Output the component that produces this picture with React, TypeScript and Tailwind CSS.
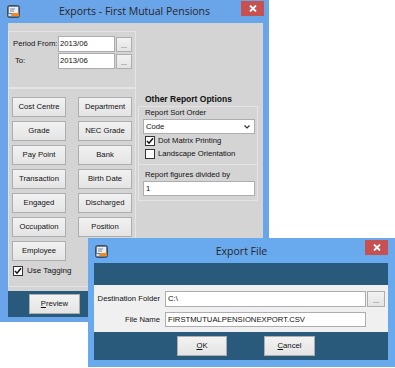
import React from "react";

function WinIcon() {
  return (
    <svg width="13" height="13" viewBox="0 0 13 13">
      <rect x="0.5" y="0.5" width="12" height="12" rx="2" fill="#6d7f95" stroke="#3f4d5e" />
      <rect x="2" y="2" width="9" height="6" fill="#e8eef5" />
      <rect x="3" y="3.5" width="5" height="1" fill="#7a8aa0" />
      <rect x="3" y="5.5" width="4" height="1" fill="#7a8aa0" />
      <rect x="5" y="8" width="7" height="3" fill="#f08a1c" />
      <rect x="1.5" y="9" width="3" height="2" fill="#d9dde3" />
    </svg>
  );
}

function CloseBtn() {
  return (
    <div className="flex items-center justify-center w-[23px] h-[15px] bg-[#c75050]">
      <svg width="8" height="7" viewBox="0 0 8 7">
        <path d="M1 0.5 L7 6.5 M7 0.5 L1 6.5" stroke="#fff" strokeWidth="1.8" />
      </svg>
    </div>
  );
}

function Btn({ children, w = "w-[54px]" }: { children: React.ReactNode; w?: string }) {
  return (
    <div
      className={`flex items-center justify-center h-[20px] ${w} border border-[#adadad] bg-linear-to-b from-[#f2f2f2] to-[#e4e4e4] text-[#111] text-[7.7px]`}
    >
      {children}
    </div>
  );
}

function SmallBtn({ w = "w-[16px]", h = "h-[15px]" }: { w?: string; h?: string }) {
  return (
    <div
      className={`flex items-center justify-center ${w} ${h} border border-[#adadad] bg-linear-to-b from-[#f2f2f2] to-[#e4e4e4] text-[#333] text-[7px] leading-none pt-[3px]`}
    >
      ...
    </div>
  );
}

function Check({ checked }: { checked: boolean }) {
  return (
    <div className="flex items-center justify-center w-[10px] h-[10px] border border-[#333] bg-white">
      {checked && (
        <svg width="8" height="8" viewBox="0 0 8 8">
          <path d="M1 4 L3 6.2 L7 1.2" stroke="#111" strokeWidth="1.5" fill="none" />
        </svg>
      )}
    </div>
  );
}

const leftButtons: [string, string | null][] = [
  ["Cost Centre", "Department"],
  ["Grade", "NEC Grade"],
  ["Pay Point", "Bank"],
  ["Transaction", "Birth Date"],
  ["Engaged", "Discharged"],
  ["Occupation", "Position"],
  ["Employee", null],
];

export default function App() {
  return (
    <div className="relative w-[395px] h-[368px] bg-white overflow-hidden font-['Liberation_Sans',Arial,sans-serif] text-[7.7px] text-[#111]">
      {/* Main window */}
      <div className="absolute left-0 top-0 w-[269px] h-[322px] bg-[#6ba5e9] flex flex-col">
        <div className="relative h-[23px] flex items-center justify-center">
          <div className="absolute left-[7px] top-[5px]">
            <WinIcon />
          </div>
          <span className="font-['Open_Sans',sans-serif] text-[10.5px] text-[#262626] mt-[1px]">
            Exports - First Mutual Pensions
          </span>
          <div className="absolute right-[5px] top-[1px]">
            <CloseBtn />
          </div>
        </div>
        <div className="flex-1 ml-[8px] mr-[6px] mb-[5px] bg-[#d4d4d4] flex flex-col">
          {/* Period group */}
          <div className="mt-[8px] w-[128px] h-[57px] border border-[#e4e4e4] pl-[4px] pt-[4px] flex flex-col gap-[1px]">
            <div className="flex items-center h-[16px]">
              <span className="w-[45px]">Period From:</span>
              <div className="w-[57px] h-[16px] bg-white border border-[#abadb3] flex items-center pl-[1px]">2013/06</div>
              <div className="ml-[1px]">
                <SmallBtn />
              </div>
            </div>
            <div className="flex items-center h-[16px]">
              <span className="w-[45px] pl-[2px]">To:</span>
              <div className="w-[57px] h-[16px] bg-white border border-[#abadb3] flex items-center pl-[1px]">2013/06</div>
              <div className="ml-[1px]">
                <SmallBtn />
              </div>
            </div>
          </div>
          <div className="flex">
            {/* Buttons group */}
            <div className="w-[128px] h-[199px] border border-[#e4e4e4] border-t-[#e4e4e4] pl-[3px] pt-[8px] flex flex-col gap-[4px]">
              {leftButtons.map(([a, b]) => (
                <div key={a} className="flex gap-[12px]">
                  <Btn>{a}</Btn>
                  {b && <Btn>{b}</Btn>}
                </div>
              ))}
              <div className="flex items-center gap-[4px] ml-[1px] mt-[0px]">
                <Check checked />
                <span className="text-[8px]">Use Tagging</span>
              </div>
            </div>
            {/* Right column */}
            <div className="ml-[2px] w-[120px] flex flex-col">
              <div className="pt-[6px] pl-[7px] h-[18px] font-bold text-[8.5px] leading-[11px]">Other Report Options</div>
              <div className="h-[59px] border border-[#e4e4e4] pl-[4px] pt-[1px] flex flex-col">
                <span className="ml-[2px] leading-[10px]">Report Sort Order</span>
                <div className="mt-[1px] w-[112px] h-[15px] bg-white border border-[#abadb3] flex items-center justify-between pl-[2px] pr-[4px]">
                  <span>Code</span>
                  <svg width="6" height="4" viewBox="0 0 6 4">
                    <path d="M0.5 0.5 L3 3 L5.5 0.5" stroke="#333" strokeWidth="1.2" fill="none" />
                  </svg>
                </div>
                <div className="flex items-center gap-[3px] ml-[2px] mt-[2px] h-[10px]">
                  <Check checked />
                  <span>Dot Matrix Printing</span>
                </div>
                <div className="flex items-center gap-[3px] ml-[2px] mt-[3px] h-[10px]">
                  <Check checked={false} />
                  <span>Landscape Orientation</span>
                </div>
              </div>
              <div className="h-[36px] border border-t-0 border-[#e4e4e4] pl-[4px] pt-[5px] flex flex-col">
                <span className="ml-[2px] leading-[10px]">Report figures divided by</span>
                <div className="mt-[1px] w-[112px] h-[15px] bg-white border border-[#abadb3] flex items-center pl-[2px]">1</div>
              </div>
            </div>
          </div>
          <div className="mt-auto h-[26px] bg-[#29597b] flex items-center pl-[21px]">
            <Btn w="w-[51px]">
              <span>
                <span className="underline">P</span>review
              </span>
            </Btn>
          </div>
        </div>
      </div>

      {/* Export File dialog */}
      <div className="absolute left-[88px] top-[238px] w-[307px] h-[129px] bg-[#69a9ee] flex flex-col">
        <div className="relative h-[25px] flex items-center justify-center">
          <div className="absolute left-[7px] top-[7px]">
            <WinIcon />
          </div>
          <span className="font-['Open_Sans',sans-serif] text-[10.5px] text-[#262626] mt-[2px]">Export File</span>
          <div className="absolute right-[7px] top-[2px]">
            <CloseBtn />
          </div>
        </div>
        <div className="flex-1 ml-[6px] mr-[7px] mb-[7px] flex flex-col">
          <div className="h-[22px] bg-[#29597b]" />
          <div className="h-[47px] bg-[#f0f0f0] flex flex-col pt-[6px]">
            <div className="flex items-center h-[16px]">
              <span className="w-[68px] text-right pr-[2px]">Destination Folder</span>
              <div className="ml-[3px] w-[201px] h-[16px] bg-white border border-[#abadb3] flex items-center pl-[2px]">C:\</div>
              <div className="ml-[1px]">
                <SmallBtn w="w-[18px]" h="h-[16px]" />
              </div>
            </div>
            <div className="flex items-center h-[15px] mt-[5px]">
              <span className="w-[68px] text-right pr-[2px]">File Name</span>
              <div className="ml-[3px] w-[201px] h-[15px] bg-white border border-[#abadb3] flex items-center pl-[2px]">
                FIRSTMUTUALPENSIONEXPORT.CSV
              </div>
            </div>
          </div>
          <div className="flex-1 bg-[#29597b] flex items-center pl-[83px] gap-[37px]">
            <Btn w="w-[50px]">
              <span>
                <span className="underline">O</span>K
              </span>
            </Btn>
            <Btn w="w-[51px]">
              <span>
                <span className="underline">C</span>ancel
              </span>
            </Btn>
          </div>
        </div>
      </div>
    </div>
  );
}
